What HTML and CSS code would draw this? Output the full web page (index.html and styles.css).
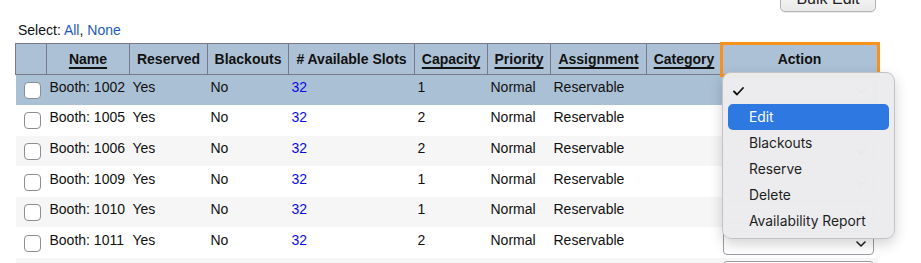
FILE: index.html
```html
<!DOCTYPE html>
<html lang="en">
<head>
  <meta charset="UTF-8">
  <title>Resources</title>
  <link rel="stylesheet" href="styles.css">
</head>
<body>

  <div class="toolbar">
    <button class="bulk-btn">Bulk Edit</button>
  </div>

  <div class="select-line">
    Select: <a href="#">All</a>, <a href="#">None</a>
  </div>

  <div class="table-wrap">
    <table class="resources">
      <colgroup>
        <col style="width:31px">
        <col style="width:83px">
        <col style="width:78px">
        <col style="width:81px">
        <col style="width:126px">
        <col style="width:73px">
        <col style="width:63px">
        <col style="width:96px">
        <col style="width:75px">
        <col style="width:156px">
      </colgroup>
      <thead>
        <tr>
          <th></th>
          <th><span class="sort">Name</span></th>
          <th>Reserved</th>
          <th>Blackouts</th>
          <th># Available Slots</th>
          <th><span class="sort">Capacity</span></th>
          <th><span class="sort">Priority</span></th>
          <th><span class="sort">Assignment</span></th>
          <th><span class="sort">Category</span></th>
          <th class="action-th">Action</th>
        </tr>
      </thead>
      <tbody id="rows"></tbody>
    </table>

    <div class="menu">
      <div class="menu-item checked">
        <svg class="check" width="11" height="9" viewBox="0 0 11 9"><polyline points="1,4.5 4,7.5 10,1" fill="none" stroke="#111" stroke-width="1.8" stroke-linecap="round" stroke-linejoin="round"/></svg>
      </div>
      <div class="menu-item active">Edit</div>
      <div class="menu-item">Blackouts</div>
      <div class="menu-item">Reserve</div>
      <div class="menu-item">Delete</div>
      <div class="menu-item">Availability Report</div>
    </div>
  </div>

  <script>
    const booths = [
      ["1002", 1], ["1005", 2], ["1006", 2], ["1009", 1],
      ["1010", 1], ["1011", 2]
    ];

    const tbody = document.getElementById("rows");

    const actionCell = `
        <td class="act">
          <div class="select-box">
            <select><option></option><option>Edit</option><option>Blackouts</option><option>Reserve</option><option>Delete</option><option>Availability Report</option></select>
            <svg class="chev" width="10" height="6" viewBox="0 0 10 6"><polyline points="1,1 5,5 9,1" fill="none" stroke="#222" stroke-width="1.6" stroke-linecap="round" stroke-linejoin="round"/></svg>
          </div>
        </td>`;

    booths.forEach((b, i) => {
      const tr = document.createElement("tr");
      if (i === 0) tr.className = "selected";
      tr.innerHTML = `
        <td class="cb"><input type="checkbox"></td>
        <td>Booth: ${b[0]}</td>
        <td>Yes</td>
        <td>No</td>
        <td><a class="slots" href="#">32</a></td>
        <td>${b[1]}</td>
        <td>Normal</td>
        <td>Reservable</td>
        <td></td>` + actionCell;
      tbody.appendChild(tr);
    });

    // next row only peeks in at the bottom of the frame
    const more = document.createElement("tr");
    more.innerHTML = `<td class="cb"></td><td colspan="8"></td>` + actionCell;
    tbody.appendChild(more);
  </script>

</body>
</html>
```

FILE: styles.css
```css
body {
  margin: 0;
  padding: 0 15px;
  font-family: "Liberation Sans", Arial, sans-serif;
  font-size: 14px;
  color: #111;
  background: white;
  overflow: hidden;
}

.toolbar {
  display: flex;
  justify-content: flex-end;
  height: 12px;
  padding-right: 30px;
}

.bulk-btn {
  width: 96px;
  height: 26px;
  margin-top: -14px;
  font-family: "Liberation Sans", Arial, sans-serif;
  font-size: 16px;
  color: #222;
  background: linear-gradient(#fbfbfb, #e9e9e9);
  border: 1px solid #b3b3b3;
  border-radius: 5px;
  box-shadow: 0 1px 1px rgba(0, 0, 0, 0.08);
}

.select-line {
  margin: 10px 0 0 3px;
  line-height: 17px;
}

.select-line a {
  color: #1d5bb6;
  text-decoration: none;
}

.table-wrap {
  position: relative;
  margin-top: 4px;
}

table.resources {
  width: 862px;
  table-layout: fixed;
  border-collapse: collapse;
}

.resources th {
  height: 30px;
  padding: 0;
  background: #acc1d6;
  border: 1px solid #7a798b;
  font-weight: bold;
  text-align: center;
  white-space: nowrap;
}

.sort {
  text-decoration: underline;
  text-decoration-thickness: 2px;
  text-underline-offset: 3px;
}

.action-th {
  outline: 3px solid #f8921c;
  outline-offset: -1px;
}

.resources td {
  height: 30.6px;
  padding: 0 3px 6px;
  box-sizing: border-box;
  white-space: nowrap;
  vertical-align: middle;
}

.resources tbody tr:nth-child(odd) {
  background: #f6f6f6;
}

.resources tbody tr.selected {
  background: #aac0d5;
}

.resources td.cb {
  text-align: center;
  padding: 1px 0 0;
}

td.cb input {
  display: block;
  appearance: none;
  width: 17px;
  height: 17px;
  margin: 0 0 0 8px;
  background: white;
  border: 1px solid #8d8d96;
  border-radius: 4px;
}

.slots {
  color: #0b0be6;
  text-decoration: none;
}

.resources td.act {
  padding: 0 0 0 1px;
}

.select-box {
  position: relative;
  width: 151px;
  height: 24px;
}

.select-box select {
  appearance: none;
  width: 100%;
  height: 100%;
  background: white;
  border: 1px solid #9c9ca4;
  border-radius: 4px;
}

.chev {
  position: absolute;
  right: 8px;
  top: 10px;
}

.menu {
  position: absolute;
  left: 707px;
  top: 29px;
  width: 161px;
  padding: 5px 5px 4px;
  background: rgba(236, 236, 238, 0.98);
  border: 1px solid #c3c3c6;
  border-radius: 9px;
  box-shadow: 0 5px 14px rgba(0, 0, 0, 0.18);
  font-family: Inter, "Liberation Sans", sans-serif;
  font-size: 13.8px;
  color: #1e1e1e;
}

.menu-item {
  height: 26px;
  line-height: 26px;
  padding-left: 21px;
  border-radius: 5px;
}

.menu-item.checked {
  display: flex;
  align-items: center;
  padding-left: 5px;
}

.menu-item.active {
  background: #2e79e1;
  color: white;
}
```
